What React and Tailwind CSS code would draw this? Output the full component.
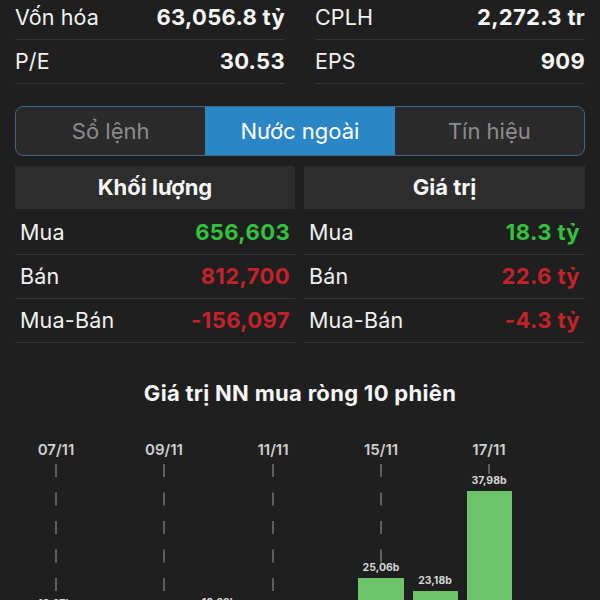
import React from "react";

const font = { fontFamily: "Inter, 'Noto Sans', sans-serif" };

function StatRow({ label, value }) {
  return (
    <div className="flex h-[44px] items-center justify-between border-b border-[#353535]">
      <span className="text-[21.5px] tracking-[0.1px] text-[#f2f2f2]">{label}</span>
      <span className="text-[22px] font-bold tracking-[0.3px] text-[#f5f5f5]">{value}</span>
    </div>
  );
}

function TableRow({ label, value, color }) {
  return (
    <div className="flex h-[44px] items-center justify-between border-b border-[#353535] px-[5px]">
      <span className="text-[21.5px] tracking-[0.2px] text-[#f0f0f0]">{label}</span>
      <span className={`text-[22px] font-bold tracking-[0.4px] ${color}`}>{value}</span>
    </div>
  );
}

function Table({ title, rows }) {
  return (
    <div className="flex flex-col">
      <div className="flex h-[43px] items-center justify-center bg-[#2d2d2d]">
        <span className="text-[22px] font-bold text-[#f5f5f5]">{title}</span>
      </div>
      <div className="mt-[2px]">
        {rows.map((r) => (
          <TableRow key={r.label} {...r} />
        ))}
      </div>
    </div>
  );
}

function Chart() {
  const dates = [
    { x: 56, label: "07/11", end: 600 },
    { x: 164, label: "09/11", end: 600 },
    { x: 273, label: "11/11", end: 600 },
    { x: 381, label: "15/11", end: 574 },
    { x: 489, label: "17/11", end: 470 },
  ];
  const bars = [
    { x: 358, w: 46, top: 574, label: "25,06b", cx: 381, ly: 567, fill: "#6cc36a" },
    { x: 413, w: 45, top: 587, label: "23,18b", cx: 435, ly: 580, fill: "#6cc36a" },
    { x: 467, w: 45, top: 487, label: "37,98b", cx: 489, ly: 480, fill: "#6cc36a" },
  ];
  return (
    <svg
      className="block"
      width="600"
      height="185"
      viewBox="0 415 600 185"
      style={font}
    >
      {dates.map((d) => (
        <g key={d.label}>
          <text
            x={d.x}
            y={451}
            textAnchor="middle"
            fontSize="15"
            fontWeight="600"
            fill="#cfcfcf"
          >
            {d.label}
          </text>
          <line
            x1={d.x}
            x2={d.x}
            y1={460}
            y2={d.end}
            stroke="#6f6f6f"
            strokeWidth="1.6"
            strokeDasharray="13 15.5"
          />
        </g>
      ))}
      {bars.map((b) => (
        <g key={b.label}>
          <rect x={b.x} y={b.top} width={b.w} height={600 - b.top} fill={b.fill} />
          <text
            x={b.cx}
            y={b.ly}
            textAnchor="middle"
            fontSize="10.5"
            fontWeight="700"
            fill="#d6d6d6"
          >
            {b.label}
          </text>
        </g>
      ))}
      <rect x={523} y={597} width={40} height={3} rx="1" fill="#3f6236" />
      <text x={55} y={603} textAnchor="middle" fontSize="10.5" fontWeight="700" fill="#d6d6d6">
        10,67b
      </text>
      <text x={219} y={602} textAnchor="middle" fontSize="10.5" fontWeight="700" fill="#d6d6d6">
        10,22b
      </text>
    </svg>
  );
}

export default function App() {
  return (
    <div
      className="h-[600px] w-[600px] overflow-hidden bg-[#1f1f1f] text-white"
      style={font}
    >
      <div className="-mt-[4px] grid grid-cols-2 gap-[30px] px-[15px]">
        <div>
          <StatRow label="Vốn hóa" value="63,056.8 tỷ" />
          <StatRow label="P/E" value="30.53" />
        </div>
        <div>
          <StatRow label="CPLH" value="2,272.3 tr" />
          <StatRow label="EPS" value="909" />
        </div>
      </div>

      <div className="mx-[15px] mt-[22px] flex h-[50px] overflow-hidden rounded-[8px] border-[1.5px] border-[#3b6688] bg-[#2b2b2b]">
        <div className="flex flex-1 items-center justify-center text-[22px] text-[#8c8c8c]">
          Sổ lệnh
        </div>
        <div className="flex flex-1 items-center justify-center bg-[#2b86c5] text-[22px] text-white">
          Nước ngoài
        </div>
        <div className="flex flex-1 items-center justify-center text-[22px] text-[#8c8c8c]">
          Tín hiệu
        </div>
      </div>

      <div className="mt-[10px] grid grid-cols-[280px_281px] gap-[9px] px-[15px]">
        <Table
          title="Khối lượng"
          rows={[
            { label: "Mua", value: "656,603", color: "text-[#34c23e]" },
            { label: "Bán", value: "812,700", color: "text-[#c42229]" },
            { label: "Mua-Bán", value: "-156,097", color: "text-[#c42229]" },
          ]}
        />
        <Table
          title="Giá trị"
          rows={[
            { label: "Mua", value: "18.3 tỷ", color: "text-[#34c23e]" },
            { label: "Bán", value: "22.6 tỷ", color: "text-[#c42229]" },
            { label: "Mua-Bán", value: "-4.3 tỷ", color: "text-[#c42229]" },
          ]}
        />
      </div>

      <div className="mt-[34px] flex justify-center">
        <span className="text-[22px] font-bold tracking-[0.3px] text-[#f5f5f5]">
          Giá trị NN mua ròng 10 phiên
        </span>
      </div>

      <div className="mt-[9px]">
        <Chart />
      </div>
    </div>
  );
}
